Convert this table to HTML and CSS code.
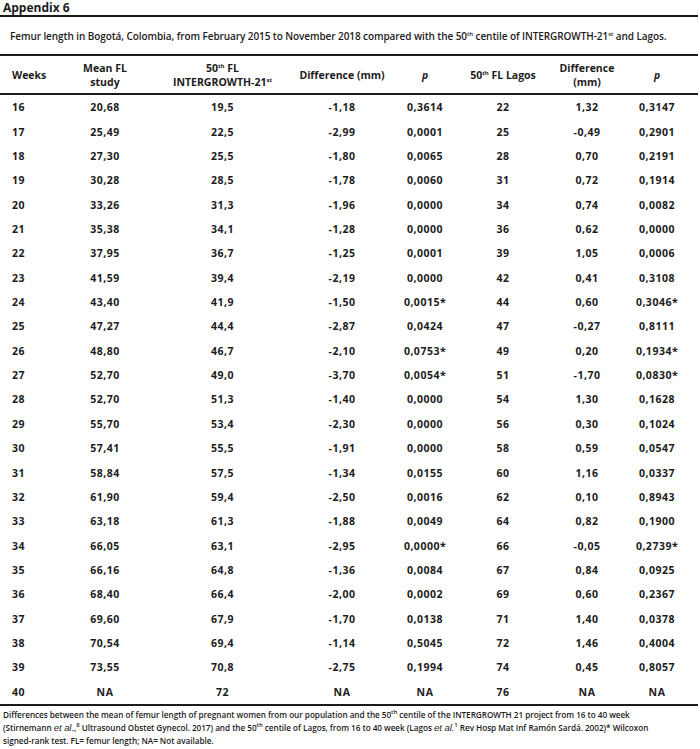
FILE: index.html
```html
<!DOCTYPE html>
<html>
<head>
<meta charset="utf-8">
<link rel="stylesheet" href="styles.css">
</head>
<body>
<div class="page">
  <h1 class="title">Appendix 6</h1>
  <p class="caption">Femur length in Bogotá, Colombia, from February 2015 to November 2018 compared with the 50<sup>th</sup> centile of INTERGROWTH-21<sup>st</sup> and Lagos.</p>
  <table class="data">
    <colgroup>
      <col class="c1"><col class="c2"><col class="c3"><col class="c4"><col class="c5"><col class="c6"><col class="c7"><col class="c8">
    </colgroup>
    <thead>
      <tr>
        <th class="left">Weeks</th>
        <th>Mean FL<br>study</th>
        <th>50<sup>th</sup> FL<br>INTERGROWTH-21<sup>st</sup></th>
        <th>Difference (mm)</th>
        <th><i>p</i></th>
        <th>50<sup>th</sup> FL Lagos</th>
        <th>Difference<br>(mm)</th>
        <th><i>p</i></th>
      </tr>
    </thead>
    <tbody>
      <tr><td class="left">16</td><td>20,68</td><td>19,5</td><td>-1,18</td><td>0,3614</td><td>22</td><td>1,32</td><td>0,3147</td></tr>
      <tr><td class="left">17</td><td>25,49</td><td>22,5</td><td>-2,99</td><td>0,0001</td><td>25</td><td>-0,49</td><td>0,2901</td></tr>
      <tr><td class="left">18</td><td>27,30</td><td>25,5</td><td>-1,80</td><td>0,0065</td><td>28</td><td>0,70</td><td>0,2191</td></tr>
      <tr><td class="left">19</td><td>30,28</td><td>28,5</td><td>-1,78</td><td>0,0060</td><td>31</td><td>0,72</td><td>0,1914</td></tr>
      <tr><td class="left">20</td><td>33,26</td><td>31,3</td><td>-1,96</td><td>0,0000</td><td>34</td><td>0,74</td><td>0,0082</td></tr>
      <tr><td class="left">21</td><td>35,38</td><td>34,1</td><td>-1,28</td><td>0,0000</td><td>36</td><td>0,62</td><td>0,0000</td></tr>
      <tr><td class="left">22</td><td>37,95</td><td>36,7</td><td>-1,25</td><td>0,0001</td><td>39</td><td>1,05</td><td>0,0006</td></tr>
      <tr><td class="left">23</td><td>41,59</td><td>39,4</td><td>-2,19</td><td>0,0000</td><td>42</td><td>0,41</td><td>0,3108</td></tr>
      <tr><td class="left">24</td><td>43,40</td><td>41,9</td><td>-1,50</td><td>0,0015*</td><td>44</td><td>0,60</td><td>0,3046*</td></tr>
      <tr><td class="left">25</td><td>47,27</td><td>44,4</td><td>-2,87</td><td>0,0424</td><td>47</td><td>-0,27</td><td>0,8111</td></tr>
      <tr><td class="left">26</td><td>48,80</td><td>46,7</td><td>-2,10</td><td>0,0753*</td><td>49</td><td>0,20</td><td>0,1934*</td></tr>
      <tr><td class="left">27</td><td>52,70</td><td>49,0</td><td>-3,70</td><td>0,0054*</td><td>51</td><td>-1,70</td><td>0,0830*</td></tr>
      <tr><td class="left">28</td><td>52,70</td><td>51,3</td><td>-1,40</td><td>0,0000</td><td>54</td><td>1,30</td><td>0,1628</td></tr>
      <tr><td class="left">29</td><td>55,70</td><td>53,4</td><td>-2,30</td><td>0,0000</td><td>56</td><td>0,30</td><td>0,1024</td></tr>
      <tr><td class="left">30</td><td>57,41</td><td>55,5</td><td>-1,91</td><td>0,0000</td><td>58</td><td>0,59</td><td>0,0547</td></tr>
      <tr><td class="left">31</td><td>58,84</td><td>57,5</td><td>-1,34</td><td>0,0155</td><td>60</td><td>1,16</td><td>0,0337</td></tr>
      <tr><td class="left">32</td><td>61,90</td><td>59,4</td><td>-2,50</td><td>0,0016</td><td>62</td><td>0,10</td><td>0,8943</td></tr>
      <tr><td class="left">33</td><td>63,18</td><td>61,3</td><td>-1,88</td><td>0,0049</td><td>64</td><td>0,82</td><td>0,1900</td></tr>
      <tr><td class="left">34</td><td>66,05</td><td>63,1</td><td>-2,95</td><td>0,0000*</td><td>66</td><td>-0,05</td><td>0,2739*</td></tr>
      <tr><td class="left">35</td><td>66,16</td><td>64,8</td><td>-1,36</td><td>0,0084</td><td>67</td><td>0,84</td><td>0,0925</td></tr>
      <tr><td class="left">36</td><td>68,40</td><td>66,4</td><td>-2,00</td><td>0,0002</td><td>69</td><td>0,60</td><td>0,2367</td></tr>
      <tr><td class="left">37</td><td>69,60</td><td>67,9</td><td>-1,70</td><td>0,0138</td><td>71</td><td>1,40</td><td>0,0378</td></tr>
      <tr><td class="left">38</td><td>70,54</td><td>69,4</td><td>-1,14</td><td>0,5045</td><td>72</td><td>1,46</td><td>0,4004</td></tr>
      <tr><td class="left">39</td><td>73,55</td><td>70,8</td><td>-2,75</td><td>0,1994</td><td>74</td><td>0,45</td><td>0,8057</td></tr>
      <tr><td class="left">40</td><td>NA</td><td>72</td><td>NA</td><td>NA</td><td>76</td><td>NA</td><td>NA</td></tr>
    </tbody>
  </table>
  <p class="note">Differences between the mean of femur length of pregnant women from our population and the 50<sup>th</sup> centile of the INTERGROWTH 21 project from 16 to 40 week<br>(Stirnemann <i>et al.</i>,<sup>8</sup> Ultrasound Obstet Gynecol. 2017) and the 50<sup>th</sup> centile of Lagos, from 16 to 40 week (Lagos <i>et al.</i><sup>1</sup> Rev Hosp Mat Inf Ramón Sardá. 2002)* Wilcoxon<br>signed-rank test. FL= femur length; NA= Not available.</p>
</div>
</body>
</html>
```

FILE: styles.css
```css
html, body {
  margin: 0;
  padding: 0;
  background: #ffffff;
}

.page {
  width: 698px;
  font-family: "Open Sans", "DejaVu Sans", sans-serif;
  color: #1c1c1c;
}

.title {
  margin: 0;
  padding: 0 0 0 3px;
  font-size: 12px;
  font-weight: 700;
  line-height: 15px;
  border-bottom: 2px solid #1a1a1a;
}

.caption {
  margin: 0;
  padding: 12px 0 11px 10px;
  font-size: 10px;
  font-weight: 600;
  line-height: 14px;
  letter-spacing: -0.08px;
}

sup {
  font-size: 6px;
  line-height: 0;
  vertical-align: 4px;
}

.data {
  width: 698px;
  border-collapse: collapse;
  table-layout: fixed;
  border-top: 2px solid #1a1a1a;
  border-bottom: 2px solid #1a1a1a;
}

.c1 { width: 47px; }
.c2 { width: 116px; }
.c3 { width: 119px; }
.c4 { width: 120px; }
.c5 { width: 46px; }
.c6 { width: 110px; }
.c7 { width: 58px; }
.c8 { width: 82px; }

.data th {
  height: 37px;
  padding: 0;
  font-size: 10.5px;
  font-weight: 700;
  line-height: 14px;
  text-align: center;
  vertical-align: middle;
  border-bottom: 2px solid #1a1a1a;
  white-space: nowrap;
}

.data td {
  height: 24.36px;
  padding: 0;
  font-size: 10.5px;
  font-weight: 700;
  line-height: 14px;
  letter-spacing: 0.5px;
  text-align: center;
  vertical-align: middle;
  white-space: nowrap;
}

.data .left {
  text-align: left;
  padding-left: 12px;
}

.note {
  margin: 0;
  padding: 2px 0 0 3px;
  font-size: 8.2px;
  font-weight: 600;
  line-height: 13px;
  letter-spacing: -0.04px;
}

.note i {
  font-family: "Liberation Sans", sans-serif;
  font-weight: 400;
  font-size: 9.5px;
}
```
